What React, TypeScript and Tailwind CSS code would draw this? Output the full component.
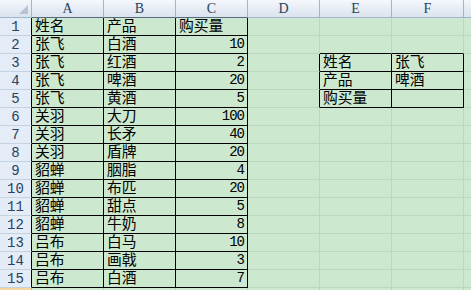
import React from "react";

type Val = string | number | null;

const data: Val[][] = [
	["姓名", "产品", "购买量"],
	["张飞", "白酒", 10],
	["张飞", "红酒", 2],
	["张飞", "啤酒", 20],
	["张飞", "黄酒", 5],
	["关羽", "大刀", 100],
	["关羽", "长矛", 40],
	["关羽", "盾牌", 20],
	["貂蝉", "胭脂", 4],
	["貂蝉", "布匹", 20],
	["貂蝉", "甜点", 5],
	["貂蝉", "牛奶", 8],
	["吕布", "白马", 10],
	["吕布", "画戟", 3],
	["吕布", "白酒", 7],
];

// little lookup box in E3:F5
const lookup: Record<number, [string, string]> = {
	3: ["姓名", "张飞"],
	4: ["产品", "啤酒"],
	5: ["购买量", ""],
};

const cols = ["A", "B", "C", "D", "E", "F"];
const cjk = { fontFamily: '"Liberation Sans", "Noto Sans CJK SC", sans-serif' };
const mono = { fontFamily: '"Liberation Mono", "DejaVu Sans Mono", monospace' };

// which cell borders are black (right / bottom of cell at row r, col c; c=0 is the row header)
const blackRight = (r: number, c: number) => {
	if (r >= 1 && r <= 15 && c >= 0 && c <= 3) return true;
	if (r >= 3 && r <= 5 && c >= 4 && c <= 6) return true;
	return false;
};
const blackBottom = (r: number, c: number) => {
	if (c >= 1 && c <= 3 && r >= 0 && r <= 15) return true;
	if ((c === 5 || c === 6) && r >= 2 && r <= 5) return true;
	return false;
};

const getValue = (r: number, c: number): Val => {
	if (r >= 1 && r <= 15 && c >= 1 && c <= 3) return data[r - 1][c - 1];
	if (lookup[r] && (c === 5 || c === 6)) return lookup[r][c - 5];
	return null;
};

const Cell = ({ r, c }: { r: number; c: number }) => {
	const v = getValue(r, c);
	const right = blackRight(r, c) ? "border-r-black" : "border-r-[#b9d8bd]";
	const bottom = blackBottom(r, c) ? "border-b-black" : "border-b-[#b9d8bd]";
	const isNum = typeof v === "number";
	return (
		<div
			className={`w-[72px] h-[18px] shrink-0 border-r border-b ${right} ${bottom} flex items-end px-[3px] text-[14.8px] leading-[17px] text-black ${
				isNum ? "justify-end" : "justify-start"
			}`}
			style={isNum ? { ...mono, fontSize: 14, letterSpacing: -1 } : cjk}>
			{v}
		</div>
	);
};

export default function App() {
	const rows = Array.from({ length: 16 }, (_, i) => i + 1);
	return (
		<div className="w-[471px] h-[290px] overflow-hidden bg-[#cce8cf] select-none">
			{/* column headers */}
			<div className="flex h-[18px]">
				<div className="w-[32px] shrink-0 border-r border-b border-[#9eb6ce] bg-gradient-to-b from-[#f4f7fb] to-[#dbe3ef] relative">
					<div className="absolute right-[3px] bottom-[3px] w-0 h-0 border-l-[9px] border-l-transparent border-b-[9px] border-b-[#b7c3d3]" />
				</div>
				{cols.map((c, i) => (
					<div
						key={c}
						className={`w-[72px] shrink-0 border-r border-b border-r-[#9eb6ce] ${
							i <= 2 ? "border-b-[#596a80]" : "border-b-[#9eb6ce]"
						} bg-gradient-to-b from-[#f4f7fb] to-[#dbe3ef] flex items-center justify-center text-[14px] leading-none text-[#27415f]`}
						style={{ fontFamily: '"Liberation Serif", serif' }}>
						{c}
					</div>
				))}
				<div className="flex-1 border-b border-[#9eb6ce] bg-gradient-to-b from-[#f4f7fb] to-[#dbe3ef]" />
			</div>

			{rows.map((r) => (
				<div key={r} className="flex h-[18px]">
					<div
						className={`w-[32px] h-[18px] shrink-0 border-r border-b ${
							blackRight(r, 0) ? "border-r-black" : "border-r-[#9eb6ce]"
						} border-b-[#c5d2e2] ${
							r === 16 ? "bg-[#f6d7a3]" : "bg-[#e4ecf7]"
						} flex items-center justify-center text-[14px] leading-none text-[#27415f]`}
						style={mono}>
						{r < 16 ? r : null}
					</div>
					{[1, 2, 3, 4, 5, 6].map((c) => (
						<Cell key={c} r={r} c={c} />
					))}
					<div className="flex-1 border-b border-[#b9d8bd]" />
				</div>
			))}
		</div>
	);
}
